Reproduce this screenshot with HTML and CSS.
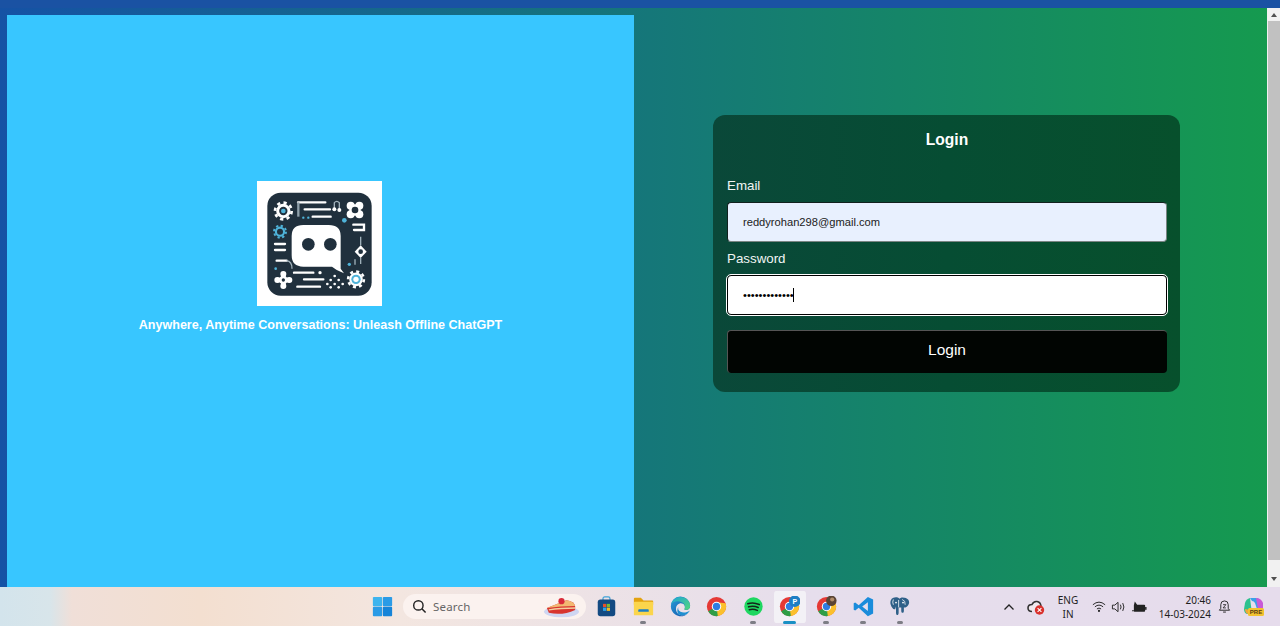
FILE: index.html
```html
<!DOCTYPE html>
<html lang="en">
<head>
<meta charset="utf-8">
<title>Login</title>
<link rel="stylesheet" href="styles.css">
</head>
<body>
<svg class="defs" width="0" height="0" aria-hidden="true">
  <defs>
    <g id="gear">
      <circle r="17" fill="none" stroke="currentColor" stroke-width="9"/>
      <circle r="25" fill="none" stroke="currentColor" stroke-width="8" stroke-dasharray="9.6 10"/>
    </g>
    <g id="chrome">
      <circle cx="12" cy="12" r="11" fill="#e53935"/>
      <path d="M12 12 L2.47 17.5 A11 11 0 0 0 13.5 22.9 L17.5 12 Z" fill="#2e9e46"/>
      <path d="M12 7 L22.4 8.4 A11 11 0 0 1 13.5 22.9 L12 12 Z" fill="#fbc02d"/>
      <circle cx="12" cy="12" r="5.4" fill="#fff"/>
      <circle cx="12" cy="12" r="4.2" fill="#2f7de1"/>
    </g>
  </defs>
</svg>
<div class="topbar"></div>
<div class="window">
  <main class="page">
    <section class="brand">
      <svg class="logo" viewBox="51 33 375 375" role="img" aria-label="Offline ChatGPT logo">
        <rect x="51" y="33" width="375" height="375" fill="#fff"/>
        <rect x="82" y="68" width="313" height="309" rx="40" fill="#20303d"/>
        <use href="#gear" class="ink-white" transform="translate(130 123)"/>
        <circle cx="130" cy="123" r="7" fill="#4fb3d9"/>
        <use href="#gear" class="ink-blue" transform="translate(120 185) scale(.72)"/>
        <use href="#gear" class="ink-white" transform="translate(348 328) scale(.95)"/>
        <circle cx="348" cy="328" r="14" fill="#4fb3d9"/>
        <circle cx="348" cy="328" r="8" fill="#fff"/>
        <g fill="#fff">
          <circle cx="332" cy="107" r="12"/><circle cx="358" cy="107" r="12"/>
          <circle cx="332" cy="133" r="12"/><circle cx="358" cy="133" r="12"/>
          <rect x="328" y="103" width="34" height="34"/>
          <circle cx="130" cy="330" r="13"/>
          <rect x="112" y="323" width="36" height="14"/>
          <rect x="123" y="312" width="14" height="36"/>
          <circle cx="112" cy="330" r="9"/><circle cx="148" cy="330" r="9"/>
          <circle cx="130" cy="312" r="9"/><circle cx="130" cy="348" r="9"/>
        </g>
        <circle cx="345" cy="120" r="10" fill="#20303d"/>
        <circle cx="130" cy="330" r="5" fill="#20303d"/>
        <g fill="none" stroke="#fff" stroke-width="7" stroke-linecap="round">
          <path d="M174 97H256M194 118H270M218 140H272"/>
          <path d="M105 222H135M105 240H135"/>
          <path d="M340 164H372V180H342"/>
          <path d="M162 308H220M192 328H250M172 350H240"/>
          <path d="M110 272H140"/>
        </g>
        <path d="M175 97V140" stroke="#8fa0ab" stroke-width="7" fill="none"/>
        <path d="M283 115V98Q290 90 298 98V118M140 272Q156 274 156 296M362 200V226M362 264V282M345 268V284" stroke="#9fb0ba" stroke-width="4" fill="none"/>
        <circle cx="283" cy="118" r="6" fill="#fff"/>
        <circle cx="298" cy="120" r="6" fill="#fff"/>
        <circle cx="313" cy="151" r="7" fill="#4fb3d9"/>
        <circle cx="190" cy="143" r="3.5" fill="#4fb3d9"/>
        <circle cx="205" cy="143" r="3.5" fill="#4fb3d9"/>
        <circle cx="107" cy="296" r="4" fill="#4fb3d9"/>
        <circle cx="328" cy="283" r="5" fill="#4fb3d9"/>
        <circle cx="240" cy="308" r="5" fill="#fff"/>
        <path d="M362 226L380 245L362 264L344 245Z" fill="#fff"/>
        <circle cx="362" cy="245" r="7" fill="#20303d"/>
        <g fill="#fff">
          <circle cx="272" cy="330" r="4"/><circle cx="284" cy="318" r="4"/><circle cx="296" cy="330" r="4"/>
          <circle cx="284" cy="342" r="4"/><circle cx="272" cy="352" r="4"/><circle cx="296" cy="352" r="4"/>
          <circle cx="308" cy="342" r="4"/><circle cx="262" cy="342" r="4"/>
        </g>
        <path d="M190 165H266Q302 165 302 198V296L312 310Q290 302 276 290H190Q155 290 155 256V198Q155 165 190 165Z" fill="#fff"/>
        <circle cx="205" cy="223" r="19" fill="#20303d"/>
        <circle cx="271" cy="223" r="19" fill="#20303d"/>
      </svg>
      <p class="tagline">Anywhere, Anytime Conversations: Unleash Offline ChatGPT</p>
    </section>
    <section class="auth">
      <form class="card">
        <h1 class="card-title">Login</h1>
        <label class="field-label" for="email">Email</label>
        <input class="field field-filled" id="email" type="email" value="reddyrohan298@gmail.com">
        <label class="field-label" for="password">Password</label>
        <div class="field-wrap">
          <input class="field field-focus" id="password" type="password" value="1234567890123">
          <span class="caret"></span>
        </div>
        <button class="submit" type="button">Login</button>
      </form>
    </section>
  </main>
  <div class="scrollbar">
    <span class="arrow arrow-up"></span>
    <span class="thumb"></span>
    <span class="arrow arrow-down"></span>
  </div>
</div>
<footer class="taskbar">
  <div class="task-center">
    <span class="tile">
      <svg class="ico" viewBox="0 0 24 24"><rect x="1" y="1" width="10.6" height="10.6" rx="1" fill="#3db4ee"/><rect x="12.4" y="1" width="10.6" height="10.6" rx="1" fill="#2a9be6"/><rect x="1" y="12.4" width="10.6" height="10.6" rx="1" fill="#2a9be6"/><rect x="12.4" y="12.4" width="10.6" height="10.6" rx="1" fill="#1684d8"/></svg>
    </span>
    <div class="search">
      <svg class="search-ico" viewBox="0 0 16 16"><circle cx="6.8" cy="6.8" r="5" fill="none" stroke="#222" stroke-width="1.5"/><path d="M10.5 10.5L14.5 14.5" stroke="#222" stroke-width="1.6"/></svg>
      <span class="search-text">Search</span>
      <svg class="pie" viewBox="0 0 38 22"><ellipse cx="19" cy="16" rx="18" ry="5.5" fill="#cfd6f2"/><path d="M4 12L24 4Q32 5 33 10V14Q20 20 6 17Z" fill="#d8342e"/><path d="M4 12L24 4Q32 5 33 10Q18 10 4 12Z" fill="#f2b872"/><path d="M6 14Q18 12 33 12" stroke="#f5cf9d" stroke-width="1.4" fill="none"/><circle cx="19" cy="5" r="3.2" fill="#d92b3a"/></svg>
    </div>
    <span class="tile">
      <svg class="ico" viewBox="0 0 24 24"><path d="M8 5V3Q8 1 10 1H14Q16 1 16 3V5" fill="none" stroke="#3fa3d8" stroke-width="1.4"/><rect x="2" y="4" width="20" height="19" rx="3" fill="#134a82"/><rect x="8" y="9" width="3.7" height="3.7" fill="#e8502a"/><rect x="12.3" y="9" width="3.7" height="3.7" fill="#7cb82f"/><rect x="8" y="13.3" width="3.7" height="3.7" fill="#2ea3e6"/><rect x="12.3" y="13.3" width="3.7" height="3.7" fill="#f5b81e"/></svg>
    </span>
    <span class="tile tile-open">
      <svg class="ico" viewBox="0 0 24 24"><path d="M1 3Q1 2 2 2H9L12 5H22Q23 5 23 6V10H1Z" fill="#e3a20f"/><rect x="1" y="6.5" width="22" height="15.5" rx="1" fill="#fbd54c"/><path d="M7 15H17Q18 15 18 16V18H6V16Q6 15 7 15Z" fill="#1c7fc4"/></svg>
    </span>
    <span class="tile">
      <svg class="ico" viewBox="0 0 24 24"><defs><linearGradient id="edgeA" x1="0" y1="0" x2="1" y2="1"><stop offset="0" stop-color="#2a9fd8"/><stop offset="1" stop-color="#0f4fa8"/></linearGradient><linearGradient id="edgeB" x1="0" y1="0" x2="1" y2="1"><stop offset="0" stop-color="#1fa6d6"/><stop offset="1" stop-color="#52d77a"/></linearGradient></defs><path d="M1 12A11 11 0 0 1 23 11C23 15.500 19 16.500 16.500 15.500C18.500 11 15 7.500 11 8.500C6 10 5.500 17 9.500 20.500C12 22.500 16.500 22.500 19.500 20.500C16 24 10 24 6 21.200C3 19 1 16 1 12Z" fill="url(#edgeA)"/><path d="M1.500 9C3 4 7 1 12 1C18.500 1 23 6 23 11C23 15.500 19 16.500 16.500 15.500C18 12 17 9 14 7.500C9 5 4 6 1.500 9Z" fill="url(#edgeB)"/><path d="M9.500 20.500C11.500 22.500 16.500 22.500 19.500 20.500C21 19 22 18 22.500 16.500C19.500 19 15 19.500 12 18C9.500 16.800 9 14.500 9.500 12.500C8 15 8 18.500 9.500 20.500Z" fill="#1f8fd0"/></svg>
    </span>
    <span class="tile">
      <svg class="ico" viewBox="0 0 24 24"><use href="#chrome"/></svg>
    </span>
    <span class="tile tile-open">
      <svg class="ico" viewBox="0 0 24 24"><circle cx="12" cy="12" r="10.5" fill="#1ed760"/><path d="M5.500 8.800Q12 6.800 18.600 9.800M6.400 12.400Q12 10.800 17.400 13.200M7.200 15.600Q12 14.400 16.400 16.400" fill="none" stroke="#13261a" stroke-width="1.8" stroke-linecap="round"/></svg>
    </span>
    <span class="tile tile-open tile-active">
      <svg class="ico" viewBox="0 0 24 24"><use href="#chrome"/><circle cx="18" cy="6" r="6.6" fill="#1c7fc4"/><text class="badge-letter" x="18" y="8.6">P</text></svg>
    </span>
    <span class="tile tile-open">
      <svg class="ico" viewBox="0 0 24 24"><use href="#chrome"/><circle cx="17.500" cy="5.500" r="6" fill="#5a4434"/><circle cx="18.500" cy="4" r="2.4" fill="#b08b68"/></svg>
    </span>
    <span class="tile tile-open">
      <svg class="ico" viewBox="0 0 24 24"><path d="M17 1L23 4V20L17 23L6.500 13.500L2.500 16.700L.8 15.600V8.400L2.500 7.300L6.500 10.500ZM17 7L10.500 12L17 17Z" fill="#1a8cdb"/></svg>
    </span>
    <span class="tile tile-open">
      <svg class="ico" viewBox="0 0 24 24"><path d="M5 2C2 3 1 7 2 10C3 13 5 16 7 15L8 12V19C8 22.500 11 22.500 11 19V13H14V17C14 20 17 20 17 17V13C20 14 23 10 23 7C23 4 20 2 17 2C15 1 13 2 12 3C10 1 7 1 5 2Z" fill="#2f6088"/><path d="M11 4.500V13M15 4Q19 5 18.500 10M5 4Q3.500 7 5 10" stroke="#e3ebf2" stroke-width="1" fill="none"/><circle cx="8" cy="7.500" r="1" fill="#fff"/><circle cx="16" cy="7.500" r="1" fill="#fff"/></svg>
    </span>
  </div>
  <div class="tray">
    <svg class="tray-chevron" viewBox="0 0 12 8"><path d="M1.500 6.500L6 2L10.500 6.500" fill="none" stroke="#222" stroke-width="1.3"/></svg>
    <svg class="tray-cloud" viewBox="0 0 18 16"><path d="M5 12.500Q1 12.500 1 9Q1 5.500 5 5.500Q6.500 2 10 2.500Q13.500 3 14 7" fill="#f0e8ee" stroke="#333" stroke-width="1.6"/><circle cx="12.500" cy="11" r="4.700" fill="#d9302c"/><path d="M10.600 9.100L14.400 12.900M14.400 9.100L10.600 12.900" stroke="#fff" stroke-width="1.1"/></svg>
    <div class="tray-lang"><span>ENG</span><span>IN</span></div>
    <svg class="tray-wifi" viewBox="0 0 16 14"><path d="M1 5Q8 -1 15 5M3.300 7.400Q8 3.400 12.700 7.400M5.600 9.800Q8 7.800 10.400 9.800" fill="none" stroke="#222" stroke-width="1.1"/><circle cx="8" cy="12" r="1.2" fill="#222"/></svg>
    <svg class="tray-sound" viewBox="0 0 16 14"><path d="M1.500 5H4L7.500 2V12L4 9H1.500Z" fill="none" stroke="#222" stroke-width="1"/><path d="M10 4.500Q11.500 7 10 9.500M12.500 2.800Q15 7 12.500 11.200" fill="none" stroke="#222" stroke-width="1"/></svg>
    <svg class="tray-battery" viewBox="0 0 16 14"><path d="M2 5L3 1L5.500 4.500H13Q14 4.500 14 5.500V11Q14 12 13 12H3Q2 12 2 11Z" fill="#222"/><rect x="14" y="7" width="1.500" height="3" fill="#222"/><path d="M0 11H3" stroke="#222" stroke-width="1"/></svg>
    <div class="tray-clock"><span>20:46</span><span>14-03-2024</span></div>
    <svg class="tray-bell" viewBox="0 0 14 16"><path d="M7 2Q3 2 3 6V10L1.500 12H12.500L11 10V6Q11 2 7 2ZM5.500 14H8.500" fill="none" stroke="#222" stroke-width="1"/><path d="M5.500 6H8.500L5.500 9.500H8.500" fill="none" stroke="#222" stroke-width=".9"/></svg>
    <svg class="tray-copilot" viewBox="0 0 22 22"><path d="M7 2H13Q16 2 17 5L20 13H14L12 7Q11 5 9 5Z" fill="#3aa0e8"/><path d="M13 2Q18 2 20 7V13H15Z" fill="#c85ad6"/><path d="M7 2Q3 3 2 7L1 13Q1 18 5 18H9Z" fill="#2cc18e"/><path d="M2 13Q2 18 6 18H12L16 14H7Z" fill="#f0a63a"/><rect x="5" y="12" width="16" height="8" rx="1.500" fill="#f2c230"/><text class="pre-text" x="13" y="18.400">PRE</text></svg>
  </div>
</footer>
</body>
</html>
```

FILE: styles.css
```css
* { box-sizing: border-box; }
html, body { height: 100%; }
body {
  margin: 0;
  display: flex;
  flex-direction: column;
  height: 626px;
  overflow: hidden;
  font-family: "Liberation Sans", Arial, sans-serif;
}
.defs { position: absolute; }
.ink-white { color: #fff; }
.ink-blue { color: #4fb3d9; }

.topbar { height: 8px; background: #1a52a3; flex: none; }
.window { flex: 1; display: flex; min-height: 0; }
.page {
  flex: 1;
  display: flex;
  padding: 7px 0 0 7px;
  background: linear-gradient(to right, #1552a5, #159a4f);
}

.brand {
  width: 627px;
  background: #38c6ff;
  display: flex;
  flex-direction: column;
  align-items: center;
  padding-top: 166px;
}
.logo { width: 125px; height: 125px; display: block; margin-right: 2px; }
.tagline {
  margin: 12px 0 0;
  font-size: 12.55px;
  line-height: 15px;
  font-weight: 700;
  color: #fff;
}

.auth { flex: 1; padding: 100px 0 0 79px; }
.card {
  width: 467px;
  height: 277px;
  padding: 15px 13px 0 14px;
  border-radius: 12px;
  background: linear-gradient(to right, #0a4839, #064d33 50%, #07502c);
  display: flex;
  flex-direction: column;
}
.card-title {
  margin: 0 0 28px;
  text-align: center;
  font-size: 15.6px;
  line-height: 20px;
  font-weight: 700;
  color: #fff;
}
.field-label {
  font-size: 13.33px;
  line-height: 16px;
  color: #f1f5f4;
  margin-bottom: 8px;
}
.field-wrap { position: relative; }
.field {
  display: block;
  width: 440px;
  height: 40px;
  padding: 0 15px;
  font: 11.15px "Liberation Sans", Arial, sans-serif;
  color: #222;
  border-radius: 4px;
}
.field-filled {
  background: #e8f0fe;
  border: 1px solid #7a8583;
  border-top-color: #12211e;
  border-left-color: #12211e;
  margin-bottom: 9px;
}
.field-focus {
  background: #fff;
  border: 1.5px solid #000;
  outline: 1px solid #fff;
  color: #000;
}
.caret {
  position: absolute;
  left: 66px;
  top: 13px;
  width: 1px;
  height: 14px;
  background: #000;
}
.submit {
  margin-top: 15px;
  width: 440px;
  height: 43px;
  padding: 0 1px 4px 0;
  background: #010502;
  border: 0;
  border-left: 1px solid #555;
  border-top: 1px solid #555;
  border-radius: 4px;
  color: #fff;
  font: 15.5px "Liberation Sans", Arial, sans-serif;
}

.scrollbar {
  width: 13px;
  flex: none;
  background: #f1f1f1;
  display: flex;
  flex-direction: column;
  align-items: center;
  padding: 5px 0 6px;
}
.arrow { width: 0; height: 0; border-left: 3.5px solid transparent; border-right: 3.5px solid transparent; flex: none; }
.arrow-up { border-bottom: 4px solid #505050; }
.arrow-down { border-top: 4px solid #505050; }
.thumb { width: 12px; align-self: flex-end; flex: none; height: 539px; margin: 4px 0 auto; background: #c1c1c1; }

.taskbar {
  flex: none;
  height: 39px;
  position: relative;
  display: flex;
  align-items: center;
  background: linear-gradient(to right, #d3e4ec 0, #d8e5ea 50px, #f0dfd8 72px, #f3dfd0 200px, #f3e6e0 400px, #e6deec 800px, #e6dcec 1280px);
  font-family: "Noto Sans", "Open Sans", sans-serif;
  color: #1e1e1e;
  padding-left: 364px;
}
.task-center { display: flex; align-items: center; }
.tile {
  width: 36.6px;
  height: 32px;
  display: flex;
  align-items: center;
  justify-content: center;
  position: relative;
  border-radius: 4px;
}
.ico { width: 21px; height: 21px; display: block; }
.tile-open::after {
  content: "";
  position: absolute;
  left: 50%;
  bottom: -1px;
  width: 6px;
  height: 3px;
  margin-left: -3px;
  border-radius: 2px;
  background: #7d7d85;
}
.tile-active { padding: 0 2px; background: #f3f1f6; background-clip: content-box; }
.tile-active::after { width: 13px; margin-left: -6.5px; background: #1a8fc4; }
.badge-letter { font: 700 8px "Liberation Sans", sans-serif; fill: #fff; text-anchor: middle; }
.search {
  width: 183px;
  height: 25px;
  margin: 0 2.6px 0 2.4px;
  padding: 0 6px 0 9px;
  border-radius: 13px;
  background: #fbf2ef;
  display: flex;
  align-items: center;
  font-size: 11.5px;
  color: #666;
}
.search-ico { width: 15px; height: 15px; flex: none; }
.search-text { margin-left: 6px; flex: 1; letter-spacing: .2px; }
.pie { width: 37px; height: 22px; flex: none; }

.tray {
  position: absolute;
  left: 1003px;
  top: 0;
  bottom: 0;
  display: flex;
  align-items: center;
}
.tray-chevron { width: 12px; height: 8px; flex: none; }
.tray-cloud { width: 18px; height: 16px; margin-left: 12px; flex: none; }
.tray-lang {
  width: 30px;
  margin-left: 8px;
  display: flex;
  flex-direction: column;
  align-items: center;
  font-size: 10px;
  line-height: 14px;
}
.tray-wifi { width: 14px; height: 13px; margin-left: 9px; flex: none; }
.tray-sound { width: 15px; height: 14px; margin-left: 5px; flex: none; }
.tray-battery { width: 15px; height: 14px; margin-left: 6px; flex: none; }
.tray-clock {
  width: 57px;
  margin-left: 7px;
  display: flex;
  flex-direction: column;
  align-items: flex-end;
  font-size: 10px;
  line-height: 14px;
}
.tray-bell { width: 13px; height: 15px; margin-left: 7px; flex: none; }
.tray-copilot { width: 22px; height: 22px; margin-left: 12px; flex: none; }
.pre-text { font: 700 6px "Liberation Sans", sans-serif; fill: #5a3a10; text-anchor: middle; }
```
